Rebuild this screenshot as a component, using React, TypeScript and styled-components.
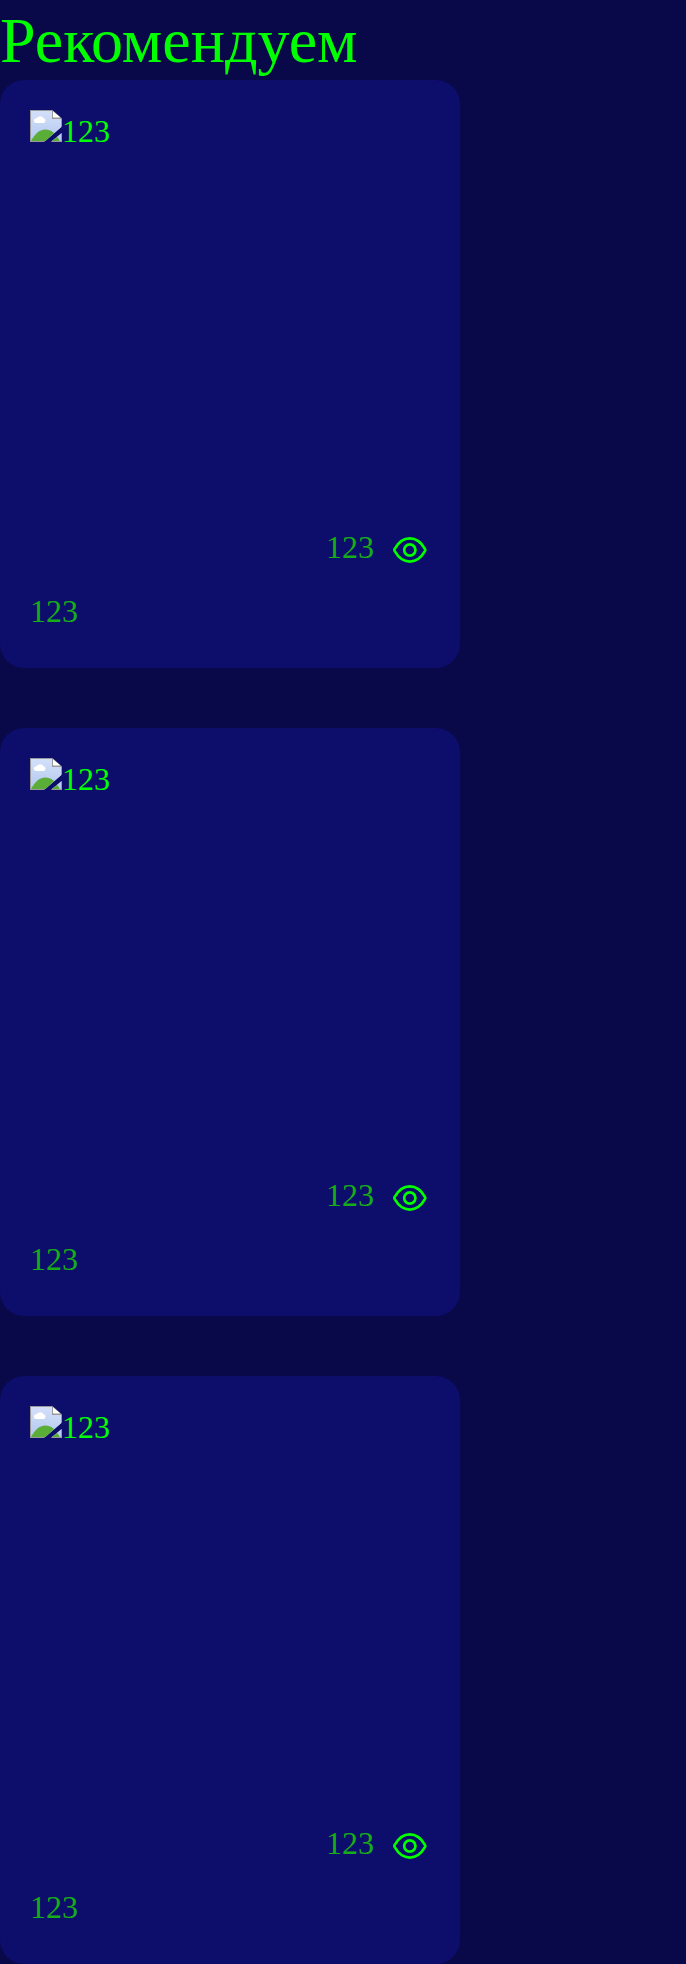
import React from "react";
import styled, { createGlobalStyle } from "styled-components";

const GlobalStyle = createGlobalStyle`
  * { box-sizing: border-box; }
  body {
    margin: 0;
    background: #090949;
    color: #00ff00;
    font-family: "Liberation Serif", "Times New Roman", serif;
    font-size: 32px;
    line-height: 40px;
  }
`;

const Title = styled.h1`
  margin: 0;
  padding-top: 1px;
  height: 80px;
  font-size: 64px;
  font-weight: 400;
  line-height: 80px;
`;

const List = styled.div`
  display: flex;
  flex-direction: column;
  gap: 60px;
`;

const Card = styled.article`
  display: flex;
  flex-direction: column;
  width: 460px;
  height: 588px;
  padding: 30px;
  border-radius: 24px;
  background: #0d0d6b;
`;

const Cover = styled.div`
  display: flex;
  align-items: flex-start;
  height: 418px;
`;

const Alt = styled.span`
  line-height: 37px;
  padding-top: 3px;
`;

const Views = styled.div`
  display: flex;
  justify-content: flex-end;
  align-items: center;
  gap: 16px;
  height: 44px;
`;

const Muted = styled.span`
  padding-bottom: 7px;
  color: #17ad17;
`;

const Caption = styled.p`
  margin: 19px 0 0;
  color: #17ad17;
`;

const BrokenImage = () => (
  <svg width="32" height="32" viewBox="0 0 16 16">
    <defs>
      <linearGradient id="sky" x1="0" y1="0" x2="0" y2="1">
        <stop offset="0" stopColor="#d3e0fa" />
        <stop offset="1" stopColor="#b3c7ee" />
      </linearGradient>
      <clipPath id="torn">
        <path d="M0 0H16V8.3L7 16H0ZM16 11.4V16H10.4Z" />
      </clipPath>
    </defs>
    <g clipPath="url(#torn)">
      <path d="M0 0H11.2L16 4.2V16H0Z" fill="#999" />
      <path d="M.5 .5H11V4.5H15.5V15.5H.5Z" fill="url(#sky)" />
      <path d="M11.5 .6V3.8H15.2Z" fill="#fff" />
      <path d="M3 6.5A1.2 1.2 0 0 1 3.2 4.1A2.2 2.2 0 0 1 7 4.3A1.15 1.15 0 0 1 6.9 6.5Z" fill="#fff" />
      <path d="M.5 15.5C2.6 11.7 5 9.8 7.7 9.8S12.8 11.7 14.9 15.5Z" fill="#5aad37" />
    </g>
  </svg>
);

const Eye = () => (
  <svg width="40" height="40" viewBox="0 0 40 40" fill="none" stroke="#00ff00" strokeWidth="2.7">
    <path d="M4.7 18.8C8.6 12 14.2 8.4 19.8 8.4S31 12 34.9 18.8C35.4 19.6 35.4 20.4 34.9 21.2C31 28 25.4 31.6 19.8 31.6S8.6 28 4.7 21.2C4.2 20.4 4.2 19.6 4.7 18.8Z" />
    <circle cx="19.8" cy="20" r="5.6" />
  </svg>
);

const items = [
  { id: 1, alt: "123", views: "123", caption: "123" },
  { id: 2, alt: "123", views: "123", caption: "123" },
  { id: 3, alt: "123", views: "123", caption: "123" },
];

export default function App() {
  return (
    <>
      <GlobalStyle />
      <Title>Рекомендуем</Title>
      <List>
        {items.map((item) => (
          <Card key={item.id}>
            <Cover>
              <BrokenImage />
              <Alt>{item.alt}</Alt>
            </Cover>
            <Views>
              <Muted>{item.views}</Muted>
              <Eye />
            </Views>
            <Caption>{item.caption}</Caption>
          </Card>
        ))}
      </List>
    </>
  );
}
